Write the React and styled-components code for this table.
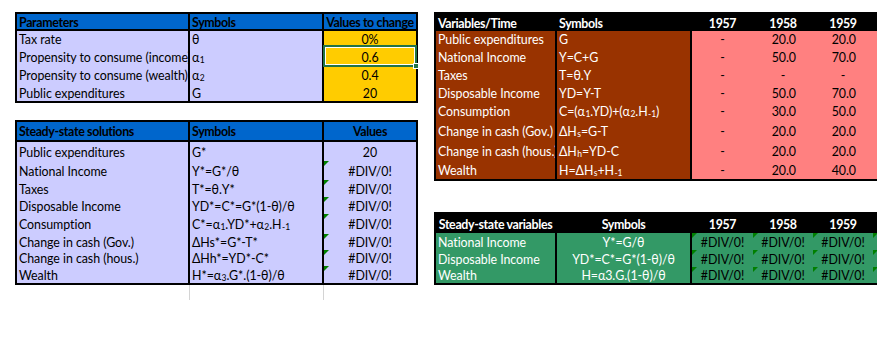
import React from 'react';
import styled, { createGlobalStyle, css } from 'styled-components';

const GlobalStyle = createGlobalStyle`
  html, body {
    margin: 0;
    padding: 0;
    background: #ffffff;
    overflow: hidden;
  }
  body {
    font-family: Lato, "Liberation Sans", sans-serif;
    font-size: 12.4px;
    color: #000;
  }
`;

const Page = styled.div`
  display: flex;
  align-items: flex-start;
  gap: 16px;
  width: 877px;
  height: 348px;
  padding: 12px 0 0 15px;
  box-sizing: border-box;
  overflow: hidden;
`;

const Column = styled.div`
  display: flex;
  flex-direction: column;
  gap: ${p => p.$gap}px;
  flex-shrink: 0;
`;

const Block = styled.div`
  display: flex;
  flex-direction: column;
`;

const Sheet = styled.div`
  display: grid;
  grid-template-columns: ${p => p.$cols};
  grid-template-rows: ${p => p.$rows};
  border: 2px solid #000;
  width: max-content;
`;

const justify = { left: 'flex-start', center: 'center', right: 'flex-end' };

const Cell = styled.div`
  position: relative;
  display: flex;
  align-items: center;
  justify-content: ${p => justify[p.$align || 'left']};
  padding: 1px ${p => (p.$padR != null ? p.$padR : 2)}px 0 2px;
  box-sizing: border-box;
  background: ${p => p.$bg};
  color: ${p => p.$fg || '#000'};
  font-weight: ${p => (p.$bold ? 700 : 400)};
  letter-spacing: ${p => (p.$bold ? '-0.35px' : '-0.05px')};
  border-left: ${p => (p.$div ? '2px solid #000' : 'none')};
  border-bottom: ${p => (p.$head ? '2px solid #000' : 'none')};
  white-space: nowrap;
  overflow: ${p => (p.$selected ? 'visible' : 'hidden')};

  ${p => p.$tick && css`
    &::before {
      content: '';
      position: absolute;
      top: 0;
      left: 0;
      border-top: 5px solid #008000;
      border-right: 5px solid transparent;
    }
  `}

  ${p => p.$selected && css`
    &::before {
      content: '';
      position: absolute;
      top: -2px;
      left: -1px;
      right: -1px;
      bottom: -1px;
      border: 2px solid #217346;
      box-shadow: inset 0 0 0 1px #fff;
      z-index: 2;
    }
    &::after {
      content: '';
      position: absolute;
      right: -3px;
      bottom: -3px;
      width: 4px;
      height: 4px;
      background: #217346;
      border: 1px solid #fff;
      z-index: 3;
    }
  `}
`;

const Sub = styled.span`
  display: inline-block;
  font-size: 8.5px;
  line-height: 1;
  position: relative;
  top: 3px;
  margin-left: 0.5px;
`;

const Tail = styled.div`
  display: grid;
  grid-template-columns: 174px 134px 95px;
  height: 15px;
`;

const TailCell = styled.div`
  border-left: ${p => (p.$line ? '1px solid #d4d4d4' : 'none')};
`;

const BLUE = '#0066cc';
const LAV = '#ccccff';
const GOLD = '#ffcc00';
const BROWN = '#993300';
const PINK = '#ff8080';
const GREEN = '#339966';

const LEFT_COLS = '171px 134px 94px';
const RIGHT_COLS = '119px 135px 63px 60px 60px 30px';

const parameters = [
  ['Tax rate', 'θ', '0%'],
  ['Propensity to consume (income)', <>α<Sub>1</Sub></>, '0.6', true],
  ['Propensity to consume (wealth)', <>α<Sub>2</Sub></>, '0.4'],
  ['Public expenditures', 'G', '20'],
];

const solutions = [
  ['Public expenditures', 'G*', '20'],
  ['National Income', 'Y*=G*/θ', '#DIV/0!'],
  ['Taxes', 'T*=θ.Y*', '#DIV/0!'],
  ['Disposable Income', 'YD*=C*=G*(1-θ)/θ', '#DIV/0!'],
  ['Consumption', <>C*=α<Sub>1</Sub>.YD*+α<Sub>2</Sub>.H<Sub>-1</Sub></>, '#DIV/0!'],
  ['Change in cash (Gov.)', 'ΔHs*=G*-T*', '#DIV/0!'],
  ['Change in cash (hous.)', 'ΔHh*=YD*-C*', '#DIV/0!'],
  ['Wealth', <>H*=α<Sub>3</Sub>.G*.(1-θ)/θ</>, '#DIV/0!'],
];

const variables = [
  ['Public expenditures', 'G', ['-', '20.0', '20.0']],
  ['National Income', 'Y=C+G', ['-', '50.0', '70.0']],
  ['Taxes', 'T=θ.Y', ['-', '-', '-']],
  ['Disposable Income', 'YD=Y-T', ['-', '50.0', '70.0']],
  ['Consumption', <>C=(α<Sub>1</Sub>.YD)+(α<Sub>2</Sub>.H<Sub>-1</Sub>)</>, ['-', '30.0', '50.0']],
  ['Change in cash (Gov.)', <>ΔH<Sub>s</Sub>=G-T</>, ['-', '20.0', '20.0']],
  ['Change in cash (hous.)', <>ΔH<Sub>h</Sub>=YD-C</>, ['-', '20.0', '20.0']],
  ['Wealth', <>H=ΔH<Sub>s</Sub>+H<Sub>-1</Sub></>, ['-', '20.0', '40.0']],
];

const steady = [
  ['National Income', 'Y*=G/θ'],
  ['Disposable Income', 'YD*=C*=G*(1-θ)/θ'],
  ['Wealth', 'H=α3.G.(1-θ)/θ'],
];

const years = ['1957', '1958', '1959'];

function ParametersSheet() {
  return (
    <Sheet $cols={LEFT_COLS} $rows="17px 16px 19px 18px 17px">
      <Cell $bg={BLUE} $bold $head>Parameters</Cell>
      <Cell $bg={BLUE} $bold $head $div>Symbols</Cell>
      <Cell $bg={BLUE} $bold $head $div $align="center">Values to change</Cell>
      {parameters.map(([label, symbol, value, selected]) => (
        <React.Fragment key={label}>
          <Cell $bg={LAV}>{label}</Cell>
          <Cell $bg={LAV} $div>{symbol}</Cell>
          <Cell $bg={GOLD} $div $align="center" $selected={selected}>{value}</Cell>
        </React.Fragment>
      ))}
    </Sheet>
  );
}

function SolutionsSheet() {
  return (
    <Block>
      <Sheet $cols={LEFT_COLS} $rows="20px 19px 19px 17px 17px 20px 16px 16px 17px">
        <Cell $bg={BLUE} $bold $head>Steady-state solutions</Cell>
        <Cell $bg={BLUE} $bold $head $div>Symbols</Cell>
        <Cell $bg={BLUE} $bold $head $div $align="center">Values</Cell>
        {solutions.map(([label, symbol, value]) => (
          <React.Fragment key={label}>
            <Cell $bg={LAV}>{label}</Cell>
            <Cell $bg={LAV} $div>{symbol}</Cell>
            <Cell $bg={LAV} $div $align="center" $tick={value !== '20'}>{value}</Cell>
          </React.Fragment>
        ))}
      </Sheet>
      <Tail>
        <TailCell />
        <TailCell $line />
        <TailCell $line />
      </Tail>
    </Block>
  );
}

function VariablesSheet() {
  return (
    <Sheet $cols={RIGHT_COLS} $rows="17px 16px 19px 18px 17px 20px 20px 20px 18px">
      <Cell $bg="#000" $fg="#fff" $bold>Variables/Time</Cell>
      <Cell $bg="#000" $fg="#fff" $bold $div>Symbols</Cell>
      {years.map((y, i) => (
        <Cell key={y} $bg="#000" $fg="#fff" $bold $div={i === 0} $align="center">{y}</Cell>
      ))}
      <Cell $bg="#000" />
      {variables.map(([label, symbol, values]) => (
        <React.Fragment key={label}>
          <Cell $bg={BROWN} $fg="#fff">{label}</Cell>
          <Cell $bg={BROWN} $fg="#fff" $div>{symbol}</Cell>
          {values.map((v, i) => (
            <Cell
              key={i}
              $bg={PINK}
              $div={i === 0}
              $align={v === '-' ? 'center' : 'right'}
              $padR={v === '-' ? 2 : 17}
            >
              {v}
            </Cell>
          ))}
          <Cell $bg={PINK} />
        </React.Fragment>
      ))}
    </Sheet>
  );
}

function SteadySheet() {
  return (
    <Sheet $cols={RIGHT_COLS} $rows="19px 17px 17px 16px">
      <Cell $bg="#000" $fg="#fff" $bold $align="center">Steady-state variables</Cell>
      <Cell $bg="#000" $fg="#fff" $bold $div $align="center">Symbols</Cell>
      {years.map((y, i) => (
        <Cell key={y} $bg="#000" $fg="#fff" $bold $div={i === 0} $align="center">{y}</Cell>
      ))}
      <Cell $bg="#000" />
      {steady.map(([label, symbol]) => (
        <React.Fragment key={label}>
          <Cell $bg={GREEN} $fg="#fff">{label}</Cell>
          <Cell $bg={GREEN} $fg="#fff" $div $align="center">{symbol}</Cell>
          {years.map((y, i) => (
            <Cell key={y} $bg={GREEN} $div={i === 0} $align="center" $tick>#DIV/0!</Cell>
          ))}
          <Cell $bg={GREEN} $tick />
        </React.Fragment>
      ))}
    </Sheet>
  );
}

export default function App() {
  return (
    <>
      <GlobalStyle />
      <Page>
        <Column $gap={17}>
          <ParametersSheet />
          <SolutionsSheet />
        </Column>
        <Column $gap={31}>
          <VariablesSheet />
          <SteadySheet />
        </Column>
      </Page>
    </>
  );
}
